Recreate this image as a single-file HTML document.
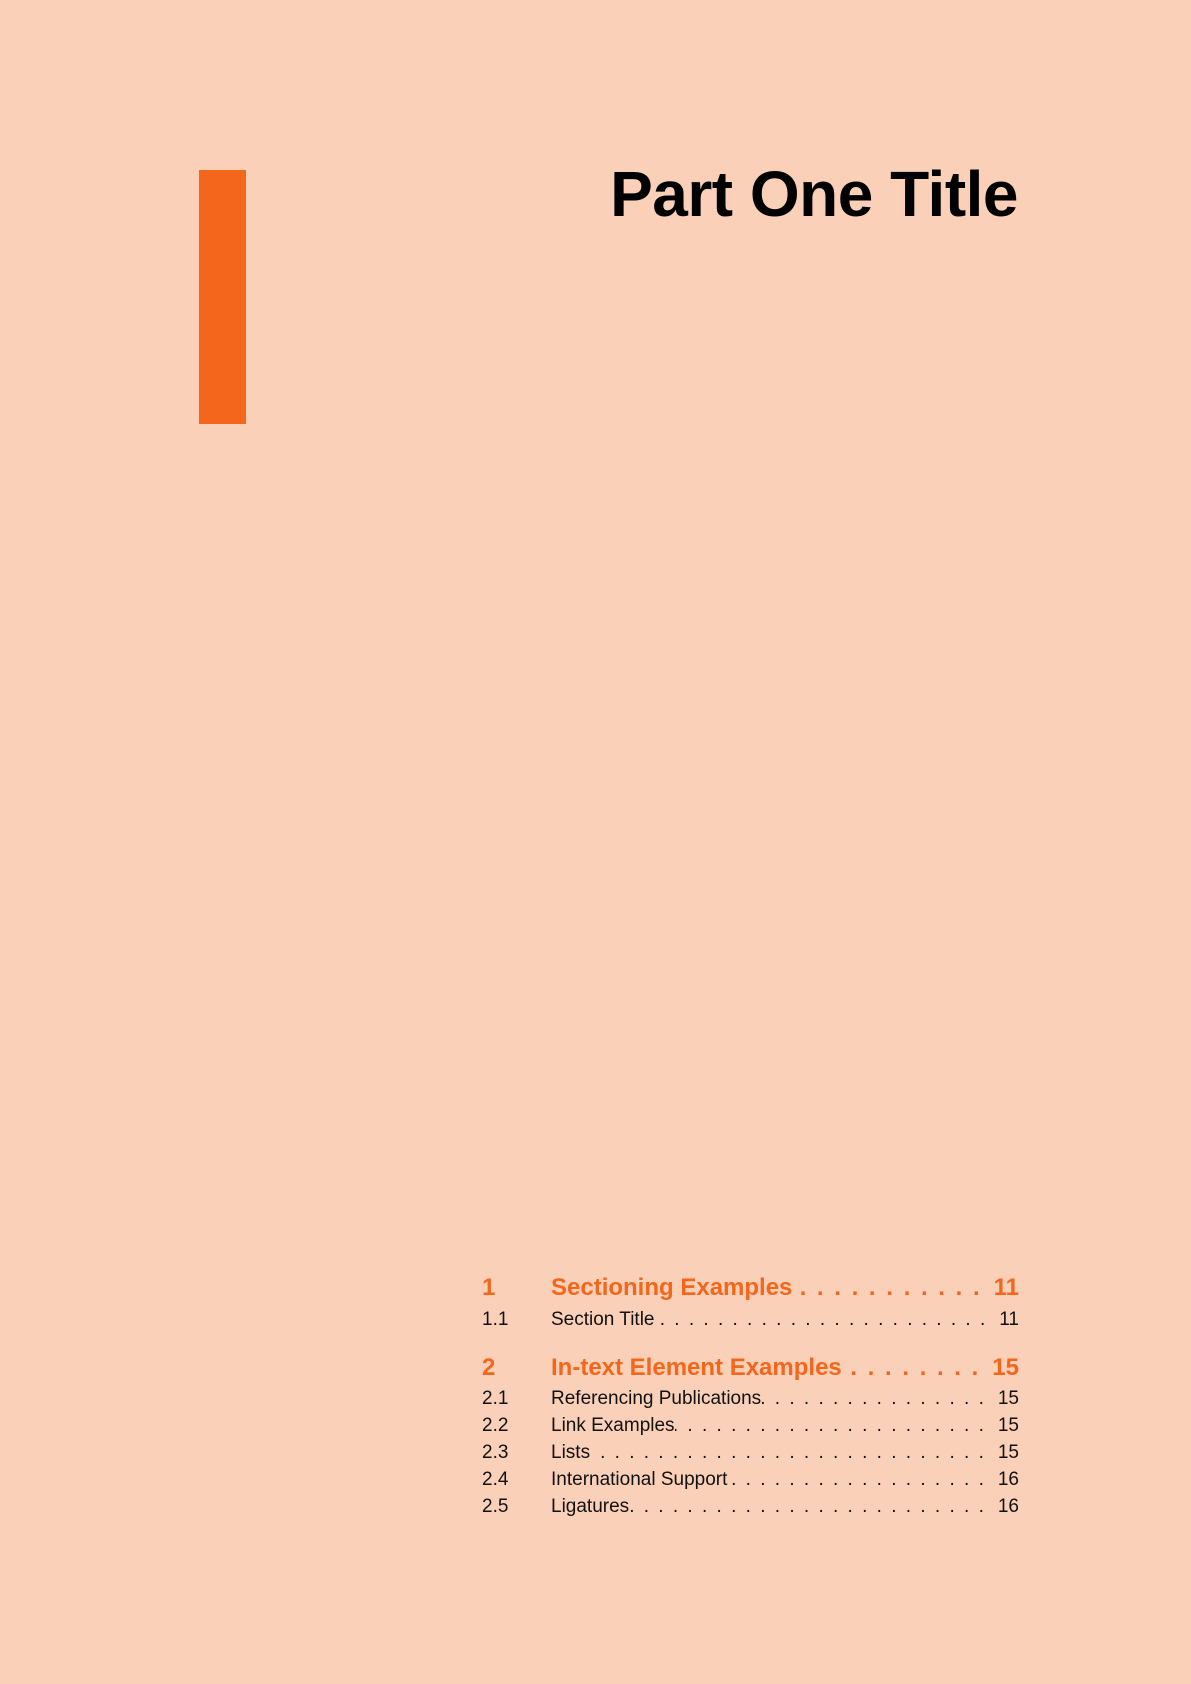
<!DOCTYPE html>
<html><head><meta charset="utf-8"><style>
html,body{margin:0;padding:0}
body{width:1191px;height:1684px;background:#FBD0B9;position:relative;overflow:hidden;font-family:"Liberation Sans",sans-serif;color:#111}
.bar{position:absolute;left:199px;top:170px;width:47px;height:254px;background:#F4661B}
.title{position:absolute;right:173px;top:162px;font-size:64px;font-weight:bold;line-height:1;letter-spacing:-0.5px;color:#000;white-space:nowrap}
.row{position:absolute;left:482px;width:537px;display:flex;line-height:1;white-space:nowrap}
.num{width:69px;flex:none}
.txt{flex:none}
.lead{flex:1;overflow:hidden;display:flex;justify-content:flex-end;padding:0 12px 0 4px;min-width:0}
.lead span{flex:none;letter-spacing:2px}
.pg{flex:none}
.s{font-size:24px;font-weight:bold;color:#F4661B}
.ss{font-size:19px}
</style></head><body>
<div class="bar"></div>
<div class="title">Part One Title</div>

<div class="row s" style="top:1276px"><span class="num">1</span><span class="txt">Sectioning Examples</span><span class="lead"><span>. . . . . . . . . . . . . . . . . . . . . . . . . . . . . . . . . . . . . . . .</span></span><span class="pg">11</span></div>
<div class="row ss" style="top:1310px"><span class="num">1.1</span><span class="txt">Section Title</span><span class="lead"><span>. . . . . . . . . . . . . . . . . . . . . . . . . . . . . . . . . . . . . . . .</span></span><span class="pg">11</span></div>

<div class="row s" style="top:1356px"><span class="num">2</span><span class="txt">In-text Element Examples</span><span class="lead"><span>. . . . . . . . . . . . . . . . . . . . . . . . . . . . . . . . . . . . . . . .</span></span><span class="pg">15</span></div>
<div class="row ss" style="top:1389px"><span class="num">2.1</span><span class="txt">Referencing Publications</span><span class="lead"><span>. . . . . . . . . . . . . . . . . . . . . . . . . . . . . . . . . . . . . . . .</span></span><span class="pg">15</span></div>
<div class="row ss" style="top:1416px"><span class="num">2.2</span><span class="txt">Link Examples</span><span class="lead"><span>. . . . . . . . . . . . . . . . . . . . . . . . . . . . . . . . . . . . . . . .</span></span><span class="pg">15</span></div>
<div class="row ss" style="top:1443px"><span class="num">2.3</span><span class="txt">Lists</span><span class="lead"><span>. . . . . . . . . . . . . . . . . . . . . . . . . . . . . . . . . . . . . . . .</span></span><span class="pg">15</span></div>
<div class="row ss" style="top:1470px"><span class="num">2.4</span><span class="txt">International Support</span><span class="lead"><span>. . . . . . . . . . . . . . . . . . . . . . . . . . . . . . . . . . . . . . . .</span></span><span class="pg">16</span></div>
<div class="row ss" style="top:1497px"><span class="num">2.5</span><span class="txt">Ligatures</span><span class="lead"><span>. . . . . . . . . . . . . . . . . . . . . . . . . . . . . . . . . . . . . . . .</span></span><span class="pg">16</span></div>
</body></html>
